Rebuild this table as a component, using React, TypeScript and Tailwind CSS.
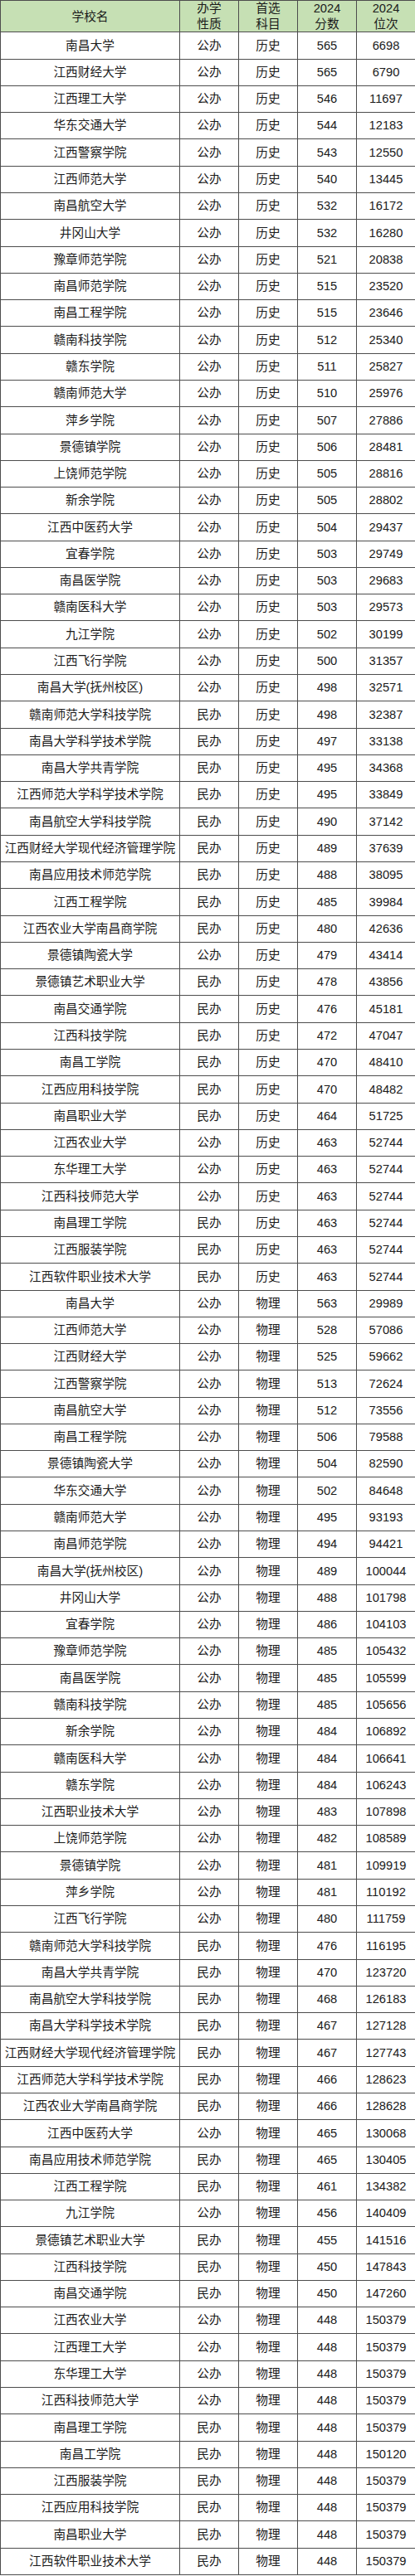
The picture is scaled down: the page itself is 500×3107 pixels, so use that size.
type Row = [string, string, string, number, number];

const hist: [string, string, number, number][] = [
  ["南昌大学", "公办", 565, 6698],
  ["江西财经大学", "公办", 565, 6790],
  ["江西理工大学", "公办", 546, 11697],
  ["华东交通大学", "公办", 544, 12183],
  ["江西警察学院", "公办", 543, 12550],
  ["江西师范大学", "公办", 540, 13445],
  ["南昌航空大学", "公办", 532, 16172],
  ["井冈山大学", "公办", 532, 16280],
  ["豫章师范学院", "公办", 521, 20838],
  ["南昌师范学院", "公办", 515, 23520],
  ["南昌工程学院", "公办", 515, 23646],
  ["赣南科技学院", "公办", 512, 25340],
  ["赣东学院", "公办", 511, 25827],
  ["赣南师范大学", "公办", 510, 25976],
  ["萍乡学院", "公办", 507, 27886],
  ["景德镇学院", "公办", 506, 28481],
  ["上饶师范学院", "公办", 505, 28816],
  ["新余学院", "公办", 505, 28802],
  ["江西中医药大学", "公办", 504, 29437],
  ["宜春学院", "公办", 503, 29749],
  ["南昌医学院", "公办", 503, 29683],
  ["赣南医科大学", "公办", 503, 29573],
  ["九江学院", "公办", 502, 30199],
  ["江西飞行学院", "公办", 500, 31357],
  ["南昌大学(抚州校区)", "公办", 498, 32571],
  ["赣南师范大学科技学院", "民办", 498, 32387],
  ["南昌大学科学技术学院", "民办", 497, 33138],
  ["南昌大学共青学院", "民办", 495, 34368],
  ["江西师范大学科学技术学院", "民办", 495, 33849],
  ["南昌航空大学科技学院", "民办", 490, 37142],
  ["江西财经大学现代经济管理学院", "民办", 489, 37639],
  ["南昌应用技术师范学院", "民办", 488, 38095],
  ["江西工程学院", "民办", 485, 39984],
  ["江西农业大学南昌商学院", "民办", 480, 42636],
  ["景德镇陶瓷大学", "公办", 479, 43414],
  ["景德镇艺术职业大学", "民办", 478, 43856],
  ["南昌交通学院", "民办", 476, 45181],
  ["江西科技学院", "民办", 472, 47047],
  ["南昌工学院", "民办", 470, 48410],
  ["江西应用科技学院", "民办", 470, 48482],
  ["南昌职业大学", "民办", 464, 51725],
  ["江西农业大学", "公办", 463, 52744],
  ["东华理工大学", "公办", 463, 52744],
  ["江西科技师范大学", "公办", 463, 52744],
  ["南昌理工学院", "民办", 463, 52744],
  ["江西服装学院", "民办", 463, 52744],
  ["江西软件职业技术大学", "民办", 463, 52744],
];

const phys: [string, string, number, number][] = [
  ["南昌大学", "公办", 563, 29989],
  ["江西师范大学", "公办", 528, 57086],
  ["江西财经大学", "公办", 525, 59662],
  ["江西警察学院", "公办", 513, 72624],
  ["南昌航空大学", "公办", 512, 73556],
  ["南昌工程学院", "公办", 506, 79588],
  ["景德镇陶瓷大学", "公办", 504, 82590],
  ["华东交通大学", "公办", 502, 84648],
  ["赣南师范大学", "公办", 495, 93193],
  ["南昌师范学院", "公办", 494, 94421],
  ["南昌大学(抚州校区)", "公办", 489, 100044],
  ["井冈山大学", "公办", 488, 101798],
  ["宜春学院", "公办", 486, 104103],
  ["豫章师范学院", "公办", 485, 105432],
  ["南昌医学院", "公办", 485, 105599],
  ["赣南科技学院", "公办", 485, 105656],
  ["新余学院", "公办", 484, 106892],
  ["赣南医科大学", "公办", 484, 106641],
  ["赣东学院", "公办", 484, 106243],
  ["江西职业技术大学", "公办", 483, 107898],
  ["上饶师范学院", "公办", 482, 108589],
  ["景德镇学院", "公办", 481, 109919],
  ["萍乡学院", "公办", 481, 110192],
  ["江西飞行学院", "公办", 480, 111759],
  ["赣南师范大学科技学院", "民办", 476, 116195],
  ["南昌大学共青学院", "民办", 470, 123720],
  ["南昌航空大学科技学院", "民办", 468, 126183],
  ["南昌大学科学技术学院", "民办", 467, 127128],
  ["江西财经大学现代经济管理学院", "民办", 467, 127743],
  ["江西师范大学科学技术学院", "民办", 466, 128623],
  ["江西农业大学南昌商学院", "民办", 466, 128628],
  ["江西中医药大学", "公办", 465, 130068],
  ["南昌应用技术师范学院", "民办", 465, 130405],
  ["江西工程学院", "民办", 461, 134382],
  ["九江学院", "公办", 456, 140409],
  ["景德镇艺术职业大学", "民办", 455, 141516],
  ["江西科技学院", "民办", 450, 147843],
  ["南昌交通学院", "民办", 450, 147260],
  ["江西农业大学", "公办", 448, 150379],
  ["江西理工大学", "公办", 448, 150379],
  ["东华理工大学", "公办", 448, 150379],
  ["江西科技师范大学", "公办", 448, 150379],
  ["南昌理工学院", "民办", 448, 150379],
  ["南昌工学院", "民办", 448, 150120],
  ["江西服装学院", "民办", 448, 150379],
  ["江西应用科技学院", "民办", 448, 150379],
  ["南昌职业大学", "民办", 448, 150379],
  ["江西软件职业技术大学", "民办", 448, 150379],
];

const rows: Row[] = [
  ...hist.map(([n, t, s, r]): Row => [n, t, "历史", s, r]),
  ...phys.map(([n, t, s, r]): Row => [n, t, "物理", s, r]),
];

const cell = "border border-[#4d4d4d] p-0 text-center align-middle";

export default function App() {
  return (
    <div className="w-[500px] bg-white text-[#1a1a1a] [font-family:'Liberation_Sans','Noto_Sans_CJK_SC',sans-serif]">
      <table className="w-[500px] table-fixed border-collapse text-[14.7px]">
        <colgroup>
          <col className="w-[216px]" />
          <col className="w-[71px]" />
          <col className="w-[71px]" />
          <col className="w-[71px]" />
          <col className="w-[71px]" />
        </colgroup>
        <thead>
          <tr className="h-[38.3px] bg-[#c6e0b4] leading-[18.3px]">
            <th className={`${cell} font-normal`}>学校名</th>
            <th className={`${cell} font-normal`}>
              办学
              <br />
              性质
            </th>
            <th className={`${cell} font-normal`}>
              首选
              <br />
              科目
            </th>
            <th className={`${cell} font-normal`}>
              2024
              <br />
              分数
            </th>
            <th className={`${cell} font-normal`}>
              2024
              <br />
              位次
            </th>
          </tr>
        </thead>
        <tbody>
          {rows.map((r, i) => (
            <tr key={i} className="h-[32.29px] leading-none">
              <td className={`${cell} whitespace-nowrap`}>{r[0]}</td>
              <td className={cell}>{r[1]}</td>
              <td className={cell}>{r[2]}</td>
              <td className={cell}>{r[3]}</td>
              <td className={cell}>{r[4]}</td>
            </tr>
          ))}
        </tbody>
      </table>
    </div>
  );
}
